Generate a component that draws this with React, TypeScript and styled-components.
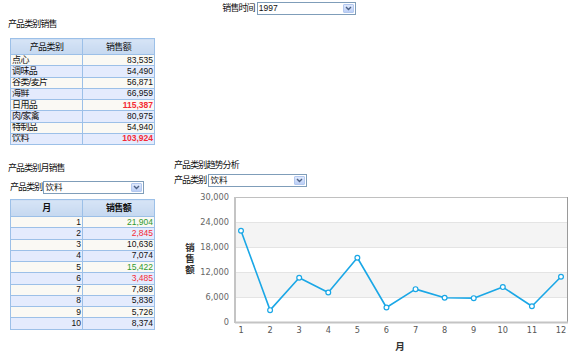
import React from "react";
import styled, { createGlobalStyle } from "styled-components";

const Global = createGlobalStyle`
  html, body { margin: 0; padding: 0; background: #fff; }
  body { font-family: "Liberation Sans", "Noto Sans CJK SC", sans-serif; font-size: 8px; color: #111; }
`;

const Page = styled.div`
  width: 576px;
  height: 363px;
  overflow: hidden;
`;

const TopBar = styled.div`
  display: flex;
  justify-content: center;
  align-items: center;
  gap: 2px;
  height: 15px;
  padding-top: 1px;
  padding-left: 2px;
`;

const Label = styled.span`
  font-size: 9px;
  letter-spacing: -0.9px;
  line-height: 11px;
  white-space: nowrap;
`;

const SelectBox = styled.div<{ $w: number }>`
  width: ${(p) => p.$w}px;
  height: 11px;
  border: 1px solid #7f9db9;
  background: #fff;
  display: flex;
  align-items: center;
  box-sizing: content-box;
`;

const SelectText = styled.span`
  flex: 1;
  font-size: 8.5px;
  line-height: 11px;
  padding-left: 1px;
  white-space: nowrap;
`;

const Arrow = styled.span`
  width: 11px;
  height: 9px;
  margin-right: 1px;
  background: linear-gradient(#dfe9fc, #bccff6);
  border: 1px solid #b3c8ef;
  box-sizing: border-box;
  display: flex;
  align-items: center;
  justify-content: center;
  border-radius: 1px;
`;

const Section = styled.div`
  padding-left: 8px;
`;

const Title = styled.div<{ $mt: number }>`
  margin-top: ${(p) => p.$mt}px;
  font-size: 9px;
  letter-spacing: -0.9px;
  line-height: 12px;
  white-space: nowrap;
`;

const Table = styled.table<{ $mt: number }>`
  border-collapse: collapse;
  margin-left: 2px;
  margin-top: ${(p) => p.$mt}px;
  width: 145px;
  table-layout: fixed;
  border: 1px solid #9cc0e8;
`;

const Th = styled.th<{ $bold?: boolean; $h: number }>`
  height: ${(p) => p.$h}px;
  padding: 0;
  font-weight: ${(p) => (p.$bold ? 700 : 400)};
  font-size: 9px;
  letter-spacing: -0.6px;
  line-height: 10px;
  background: linear-gradient(#d6e4f6, #c5d8f0);
  border: 1px solid #9cc0e8;
  text-align: center;
  color: #111;
`;

const Tr = styled.tr<{ $alt: boolean }>`
  background: ${(p) => (p.$alt ? "#e4ebfd" : "#faf9f4")};
`;

const Td = styled.td<{ $align: "left" | "right"; $color?: string; $bold?: boolean; $cjk?: boolean }>`
  height: 11.25px;
  box-sizing: border-box;
  padding: 0 1px;
  font-size: ${(p) => (p.$cjk ? "9px" : "8.5px")};
  letter-spacing: ${(p) => (p.$cjk ? "-0.6px" : "0")};
  line-height: 9px;
  border: 1px solid #9cc0e8;
  text-align: ${(p) => p.$align};
  color: ${(p) => p.$color || "#111"};
  font-weight: ${(p) => (p.$bold ? 700 : 400)};
  white-space: nowrap;
  overflow: hidden;
`;

const Lower = styled.div`
  display: flex;
  margin-top: 14px;
`;

const LeftCol = styled.div`
  width: 166px;
  padding-left: 8px;
  padding-top: 3px;
`;

const RightCol = styled.div`
  flex: 1;
`;

const FilterRow = styled.div<{ $pl: number; $mt: number; $gap: number }>`
  display: flex;
  align-items: center;
  gap: ${(p) => p.$gap}px;
  padding-left: ${(p) => p.$pl}px;
  margin-top: ${(p) => p.$mt}px;
  height: 14px;
`;

const ChartSvg = styled.svg`
  display: block;
`;

const RED = "#f42a35";
const GREEN = "#2f9a2f";

const catData: { name: string; v: string; c?: string }[] = [
  { name: "点心", v: "83,535" },
  { name: "调味品", v: "54,490" },
  { name: "谷类/麦片", v: "56,871" },
  { name: "海鲜", v: "66,959" },
  { name: "日用品", v: "115,387", c: RED },
  { name: "肉/家禽", v: "80,975" },
  { name: "特制品", v: "54,940" },
  { name: "饮料", v: "103,924", c: RED },
];

const monthData: { m: number; v: string; c?: string }[] = [
  { m: 1, v: "21,904", c: GREEN },
  { m: 2, v: "2,845", c: RED },
  { m: 3, v: "10,636" },
  { m: 4, v: "7,074" },
  { m: 5, v: "15,422", c: GREEN },
  { m: 6, v: "3,485", c: RED },
  { m: 7, v: "7,889" },
  { m: 8, v: "5,836" },
  { m: 9, v: "5,726" },
  { m: 10, v: "8,374" },
];

const series = [21904, 2845, 10636, 7074, 15422, 3485, 7889, 5836, 5726, 8374, 3770, 10870];

const Chevron = () => (
  <svg width="7" height="5" viewBox="0 0 7 5">
    <path d="M1 1 L3.5 3.5 L6 1" fill="none" stroke="#4d6185" strokeWidth="1.4" />
  </svg>
);

const Select = ({ w, text }: { w: number; text: string }) => (
  <SelectBox $w={w}>
    <SelectText>{text}</SelectText>
    <Arrow>
      <Chevron />
    </Arrow>
  </SelectBox>
);

const Chart = () => {
  // svg origin at page (174, 186)
  const ox = 174;
  const oy = 186;
  const L = 235 - ox;
  const R = 568 - ox;
  const T = 196 - oy;
  const B = 321 - oy;
  const yOf = (v: number) => B - (v / 30000) * (B - T);
  const x0 = 241 - ox;
  const step = (561 - 241) / 11;
  const ticks = [0, 6000, 12000, 18000, 24000, 30000];
  const pts = series.map((v, i) => [x0 + i * step, yOf(v)] as const);
  return (
    <ChartSvg width={402} height={170} viewBox="0 0 402 170">
      <rect x={L} y={yOf(24000)} width={R - L} height={yOf(18000) - yOf(24000)} fill="#f4f4f4" />
      <rect x={L} y={yOf(12000)} width={R - L} height={yOf(6000) - yOf(12000)} fill="#f4f4f4" />
      {[6000, 12000, 18000, 24000].map((t) => (
        <line key={t} x1={L} x2={R} y1={yOf(t) + 0.5} y2={yOf(t) + 0.5} stroke="#e4e4e4" strokeWidth={1} />
      ))}
      <line x1={L} x2={R} y1={T + 0.5} y2={T + 0.5} stroke="#c0c0c0" strokeWidth={1} />
      <line x1={R - 0.5} x2={R - 0.5} y1={T} y2={B} stroke="#9a9a9a" strokeWidth={1} />
      <line x1={L} x2={L} y1={T} y2={B + 1} stroke="#c4c4c4" strokeWidth={2} />
      <line x1={L} x2={R} y1={B + 0.5} y2={B + 0.5} stroke="#c4c4c4" strokeWidth={2} />
      {ticks.map((t) => (
        <text
          key={t}
          x={229 - ox}
          y={yOf(t) + 3}
          textAnchor="end"
          fontFamily="DejaVu Sans, sans-serif"
          fontSize="8.2"
          fill="#666"
        >
          {t === 0 ? "0" : t.toLocaleString("en-US")}
        </text>
      ))}
      {series.map((_, i) => (
        <text
          key={i}
          x={x0 + i * step}
          y={332 - oy}
          textAnchor="middle"
          fontFamily="DejaVu Sans, sans-serif"
          fontSize="8.2"
          fill="#555"
        >
          {i + 1}
        </text>
      ))}
      <text
        x={190 - ox}
        y={242 - oy}
        fontFamily="Noto Sans CJK SC, sans-serif"
        fontSize="9.5"
        fontWeight="700"
        fill="#333"
        letterSpacing="1.2"
        style={{ writingMode: "vertical-rl" }}
      >
        销售额
      </text>
      <text
        x={400 - ox}
        y={349 - oy}
        textAnchor="middle"
        fontFamily="Noto Sans CJK SC, sans-serif"
        fontSize="9.5"
        fontWeight="700"
        fill="#333"
      >
        月
      </text>
      <polyline
        points={pts.map((p) => `${p[0]},${p[1]}`).join(" ")}
        fill="none"
        stroke="#1aa7e6"
        strokeWidth={1.6}
        strokeLinejoin="round"
      />
      {pts.map((p, i) => (
        <circle key={i} cx={p[0]} cy={p[1]} r={2.4} fill="#fff" stroke="#1aa7e6" strokeWidth={1.2} />
      ))}
    </ChartSvg>
  );
};

export default function App() {
  return (
    <Page>
      <Global />
      <TopBar>
        <Label>销售时间</Label>
        <Select w={97} text="1997" />
      </TopBar>
      <Section>
        <Title $mt={2}>产品类别销售</Title>
        <Table $mt={8}>
          <colgroup>
            <col style={{ width: 72 }} />
            <col style={{ width: 72 }} />
          </colgroup>
          <thead>
            <tr>
              <Th $h={15}>产品类别</Th>
              <Th $h={15}>销售额</Th>
            </tr>
          </thead>
          <tbody>
            {catData.map((r, i) => (
              <Tr key={r.name} $alt={i % 2 === 1}>
                <Td $align="left" $cjk>
                  {r.name}
                </Td>
                <Td $align="right" $color={r.c} $bold={!!r.c}>
                  {r.v}
                </Td>
              </Tr>
            ))}
          </tbody>
        </Table>
      </Section>
      <Lower>
        <LeftCol>
          <Title $mt={0}>产品类别月销售</Title>
          <FilterRow $pl={2} $mt={6} $gap={1}>
            <Label>产品类别</Label>
            <Select w={99} text="饮料" />
          </FilterRow>
          <Table $mt={5}>
            <colgroup>
              <col style={{ width: 72 }} />
              <col style={{ width: 72 }} />
            </colgroup>
            <thead>
              <tr>
                <Th $bold $h={16}>月</Th>
                <Th $bold $h={16}>销售额</Th>
              </tr>
            </thead>
            <tbody>
              {monthData.map((r, i) => (
                <Tr key={r.m} $alt={i % 2 === 1}>
                  <Td $align="right">{r.m}</Td>
                  <Td $align="right" $color={r.c}>
                    {r.v}
                  </Td>
                </Tr>
              ))}
            </tbody>
          </Table>
        </LeftCol>
        <RightCol>
          <Title $mt={0}>产品类别趋势分析</Title>
          <FilterRow $pl={0} $mt={2} $gap={2}>
            <Label>产品类别</Label>
            <Select w={97} text="饮料" />
          </FilterRow>
          <Chart />
        </RightCol>
      </Lower>
    </Page>
  );
}
